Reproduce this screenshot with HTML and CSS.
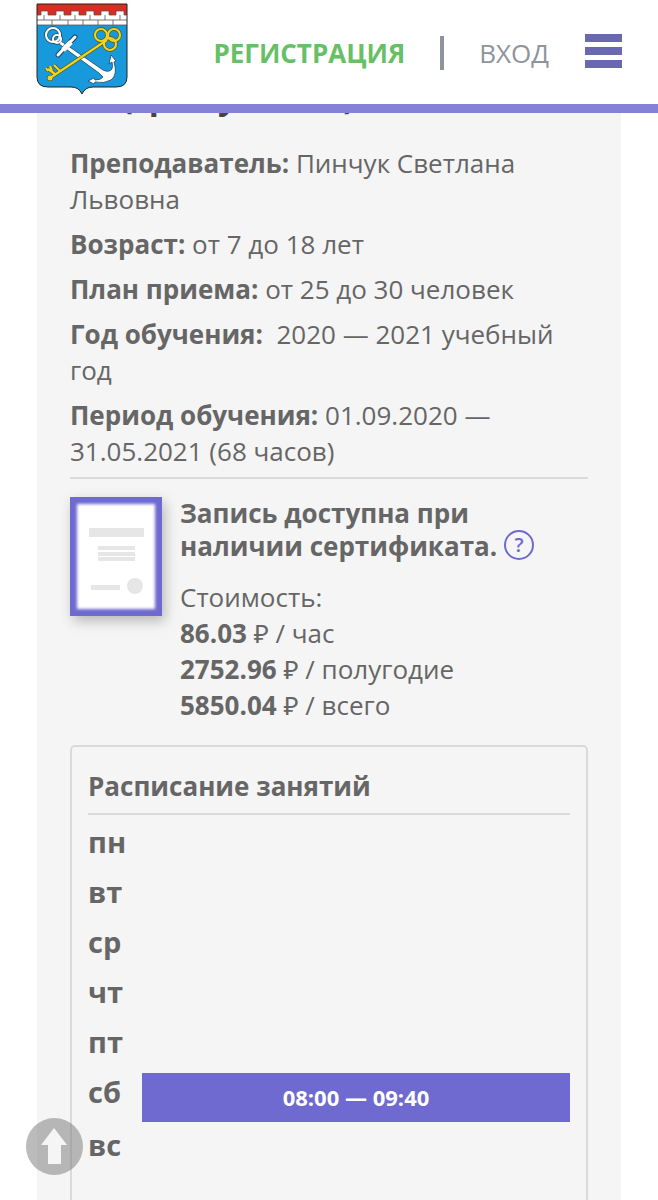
FILE: index.html
```html
<!DOCTYPE html>
<html lang="ru">
<head>
    <meta charset="UTF-8">
    <meta name="viewport" content="width=device-width, initial-scale=1.0">
    <title>Запись на программу</title>
    <link rel="stylesheet" href="styles.css">
</head>
<body>

    <!-- Header -->
    <header class="header">
        <a class="logo" href="#" aria-label="На главную">
            <svg width="92" height="92" viewBox="0 0 92 92">
                <defs>
                    <clipPath id="shield"><path d="M1 1H91V74Q91 84 80 84H57Q49 84 46 91Q43 84 35 84H12Q1 84 1 74Z"/></clipPath>
                </defs>
                <g clip-path="url(#shield)">
                    <rect width="92" height="92" fill="#1899dc"/>
                    <rect width="92" height="14" fill="#dc2b20"/>
                    <path d="M0 12H5V8H12V12H20V8H28V12H35V8H43V12H50V8H58V12H65V8H73V12H80V8H88V12H92V22H0Z" fill="#fff" stroke="#555" stroke-width="0.8"/>
                    <path d="M0 17H92M8 12V17M24 12V17M39 12V17M54 12V17M69 12V17M84 12V17M16 17V22M32 17V22M47 17V22M62 17V22M77 17V22" stroke="#555" stroke-width="0.8"/>
                </g>
                <!-- anchor -->
                <g fill="none" stroke="#1c4561" stroke-width="3.6">
                    <circle cx="17" cy="32" r="7"/>
                    <circle cx="21" cy="36" r="4"/>
                </g>
                <path d="M25 38L67 67Q73 70 76 66Q77 63 76 59L73 61L75 52L80 58L78 59Q82 72 75 77Q68 81 59 79L58 81L52 78L58 75L59 77Q65 77 67 74L63 70L23 41Z" fill="#fff" stroke="#1c4561" stroke-width="0.8"/>
                <path d="M22 52L39 34" stroke="#1c4561" stroke-width="5" stroke-linecap="round"/>
                <path d="M22 52L39 34" stroke="#fff" stroke-width="3" stroke-linecap="round"/>
                <path d="M27 47L35 39" stroke="#fff" stroke-width="5"/>
                <g fill="none" stroke="#fff" stroke-width="2.2">
                    <circle cx="17" cy="32" r="7"/>
                    <circle cx="21" cy="36" r="4"/>
                </g>
                <!-- key -->
                <g fill="none" stroke="#54501c" stroke-width="3.4">
                    <path d="M14 75L71 37M19 71L12 66M24 68L18 62M16 68L14 63M12 68L10 65"/>
                    <circle cx="65" cy="32" r="6"/><circle cx="78" cy="32" r="6"/><circle cx="74" cy="41" r="6"/>
                    <circle cx="14" cy="75" r="1.4"/>
                </g>
                <g fill="none" stroke="#f0d61c" stroke-width="2.2">
                    <path d="M14 75L71 37M19 71L12 66M24 68L18 62M16 68L14 63M12 68L10 65"/>
                    <circle cx="65" cy="32" r="6"/><circle cx="78" cy="32" r="6"/><circle cx="74" cy="41" r="6"/>
                    <circle cx="14" cy="75" r="1.4"/>
                </g>
                <path d="M1 1H91V74Q91 84 80 84H57Q49 84 46 91Q43 84 35 84H12Q1 84 1 74Z" fill="none" stroke="#222" stroke-width="1"/>
            </svg>
        </a>
        <nav class="nav">
            <a class="register" href="#">РЕГИСТРАЦИЯ</a>
            <span class="divider"></span>
            <a class="login" href="#">ВХОД</a>
            <button class="menu" type="button" aria-label="Меню">
                <span></span>
                <span></span>
                <span></span>
            </button>
        </nav>
    </header>

    <!-- Program card -->
    <main class="card">
        <h1>3D (гр. II учения)</h1>

        <div class="info">
            <p><b>Преподаватель:</b> Пинчук Светлана Львовна</p>
            <p><b>Возраст:</b> от 7 до 18 лет</p>
            <p><b>План приема:</b> от 25 до 30 человек</p>
            <p><b>Год обучения:</b>&nbsp; 2020 — 2021 учебный год</p>
            <p><b>Период обучения:</b> 01.09.2020 — 31.05.2021 (68 часов)</p>
        </div>

        <!-- Certificate and prices -->
        <section class="certificate">
            <svg class="certificate-icon" width="92" height="119" viewBox="0 0 92 119">
                <defs>
                    <filter id="soft"><feGaussianBlur stdDeviation="1.5"/></filter>
                </defs>
                <rect x="7" y="7" width="78" height="105" fill="#fff" filter="url(#soft)"/>
                <rect x="19" y="31" width="55" height="9"/>
                <rect x="28" y="49" width="37" height="4"/>
                <rect x="28" y="55" width="37" height="4"/>
                <rect x="28" y="60" width="37" height="4"/>
                <rect x="21" y="88" width="29" height="5"/>
                <circle cx="65" cy="89" r="8"/>
            </svg>
            <div>
                <h2>Запись доступна при наличии сертификата. <button class="help" type="button">?</button></h2>
                <p class="price">Стоимость:</p>
                <p class="price"><b>86.03</b> ₽ / час</p>
                <p class="price"><b>2752.96</b> ₽ / полугодие</p>
                <p class="price"><b>5850.04</b> ₽ / всего</p>
            </div>
        </section>

        <!-- Schedule -->
        <section class="schedule">
            <h3>Расписание занятий</h3>
            <table>
                <tbody>
                    <tr><th>пн</th><td></td></tr>
                    <tr><th>вт</th><td></td></tr>
                    <tr><th>ср</th><td></td></tr>
                    <tr><th>чт</th><td></td></tr>
                    <tr><th>пт</th><td></td></tr>
                    <tr><th>сб</th><td><div class="lesson">08:00 — 09:40</div></td></tr>
                    <tr><th>вс</th><td></td></tr>
                </tbody>
            </table>
        </section>
    </main>

    <!-- Scroll to top -->
    <a class="to-top" href="#" aria-label="Наверх">
        <svg width="57" height="57" viewBox="0 0 57 57">
            <path d="M28 10L41 27H35V46H22V27H15Z" fill="#f5f5f5"/>
        </svg>
    </a>

</body>
</html>
```

FILE: styles.css
```css
* {
    box-sizing: border-box;
}
body {
    margin: 0;
    background: #fff;
    color: #666;
    font-family: "Open Sans", "Noto Sans", sans-serif;
    font-size: 26px;
    line-height: 36px;
}
h1, h2, h3, p {
    margin: 0;
}
a {
    text-decoration: none;
}
button {
    font-family: inherit;
    background: none;
    cursor: pointer;
}
.header {
    position: fixed;
    top: 0;
    left: 0;
    right: 0;
    z-index: 2;
    display: flex;
    justify-content: space-between;
    align-items: flex-start;
    height: 113px;
    padding: 3px 36px 0;
    background: #fff;
    border-bottom: 9px solid #8481d6;
}
.logo svg {
    display: block;
}
.nav {
    display: flex;
    align-items: center;
    height: 100px;
}
.register {
    color: #67bf66;
    font-weight: bold;
}
.divider {
    width: 4px;
    height: 34px;
    margin: 0 35px;
    background: #8d949c;
}
.login {
    color: #8d949c;
}
.menu {
    display: flex;
    flex-direction: column;
    gap: 5px;
    width: 37px;
    margin-left: 36px;
    margin-bottom: 4px;
    padding: 0;
    border: none;
}
.menu span {
    height: 8px;
    background: #6a68b2;
}
.card {
    margin: 0 37px;
    padding: 75px 33px 60px;
    background: #f5f5f5;
}
h1 {
    color: #444;
    font-size: 33px;
    line-height: 44px;
}
.info {
    padding-top: 26px;
    padding-bottom: 8px;
    border-bottom: 2px solid #dadada;
}
.info p + p {
    margin-top: 9px;
}
.certificate {
    display: flex;
    align-items: flex-start;
    gap: 18px;
    padding: 18px 0 22px;
}
.certificate-icon {
    flex-shrink: 0;
    background: #6e6acf;
    fill: #e6e6e6;
    box-shadow: 3px 5px 12px rgba(0, 0, 0, 0.25);
}
h2 {
    margin-bottom: 16px;
    font-size: 26px;
    line-height: 33px;
}
.help {
    width: 30px;
    height: 30px;
    padding: 0;
    border: 2px solid #6e6acf;
    border-radius: 50%;
    color: #6e6acf;
    font-size: 20px;
    font-weight: 600;
    line-height: 24px;
    vertical-align: top;
}
.price {
    line-height: 36px;
}
.schedule {
    min-height: 500px;
    padding: 20px 16px;
    border: 2px solid #dadada;
    border-radius: 5px;
}
h3 {
    padding-bottom: 8px;
    border-bottom: 2px solid #dadada;
    font-size: 26px;
    line-height: 38px;
}
table {
    width: 100%;
    margin-top: 4px;
    border-collapse: collapse;
}
th, td {
    height: 50px;
    padding: 0;
    vertical-align: top;
}
th {
    width: 54px;
    font-size: 29px;
    line-height: 46px;
    text-align: left;
}
.lesson {
    margin: 4px 0 0;
    background: #6e6acf;
    color: #fff;
    font-size: 22px;
    font-weight: bold;
    line-height: 49px;
    text-align: center;
}
.to-top {
    position: fixed;
    left: 26px;
    bottom: 25px;
    z-index: 2;
    border-radius: 50%;
    background: rgba(120, 120, 120, 0.5);
}
.to-top svg {
    display: block;
}
```
